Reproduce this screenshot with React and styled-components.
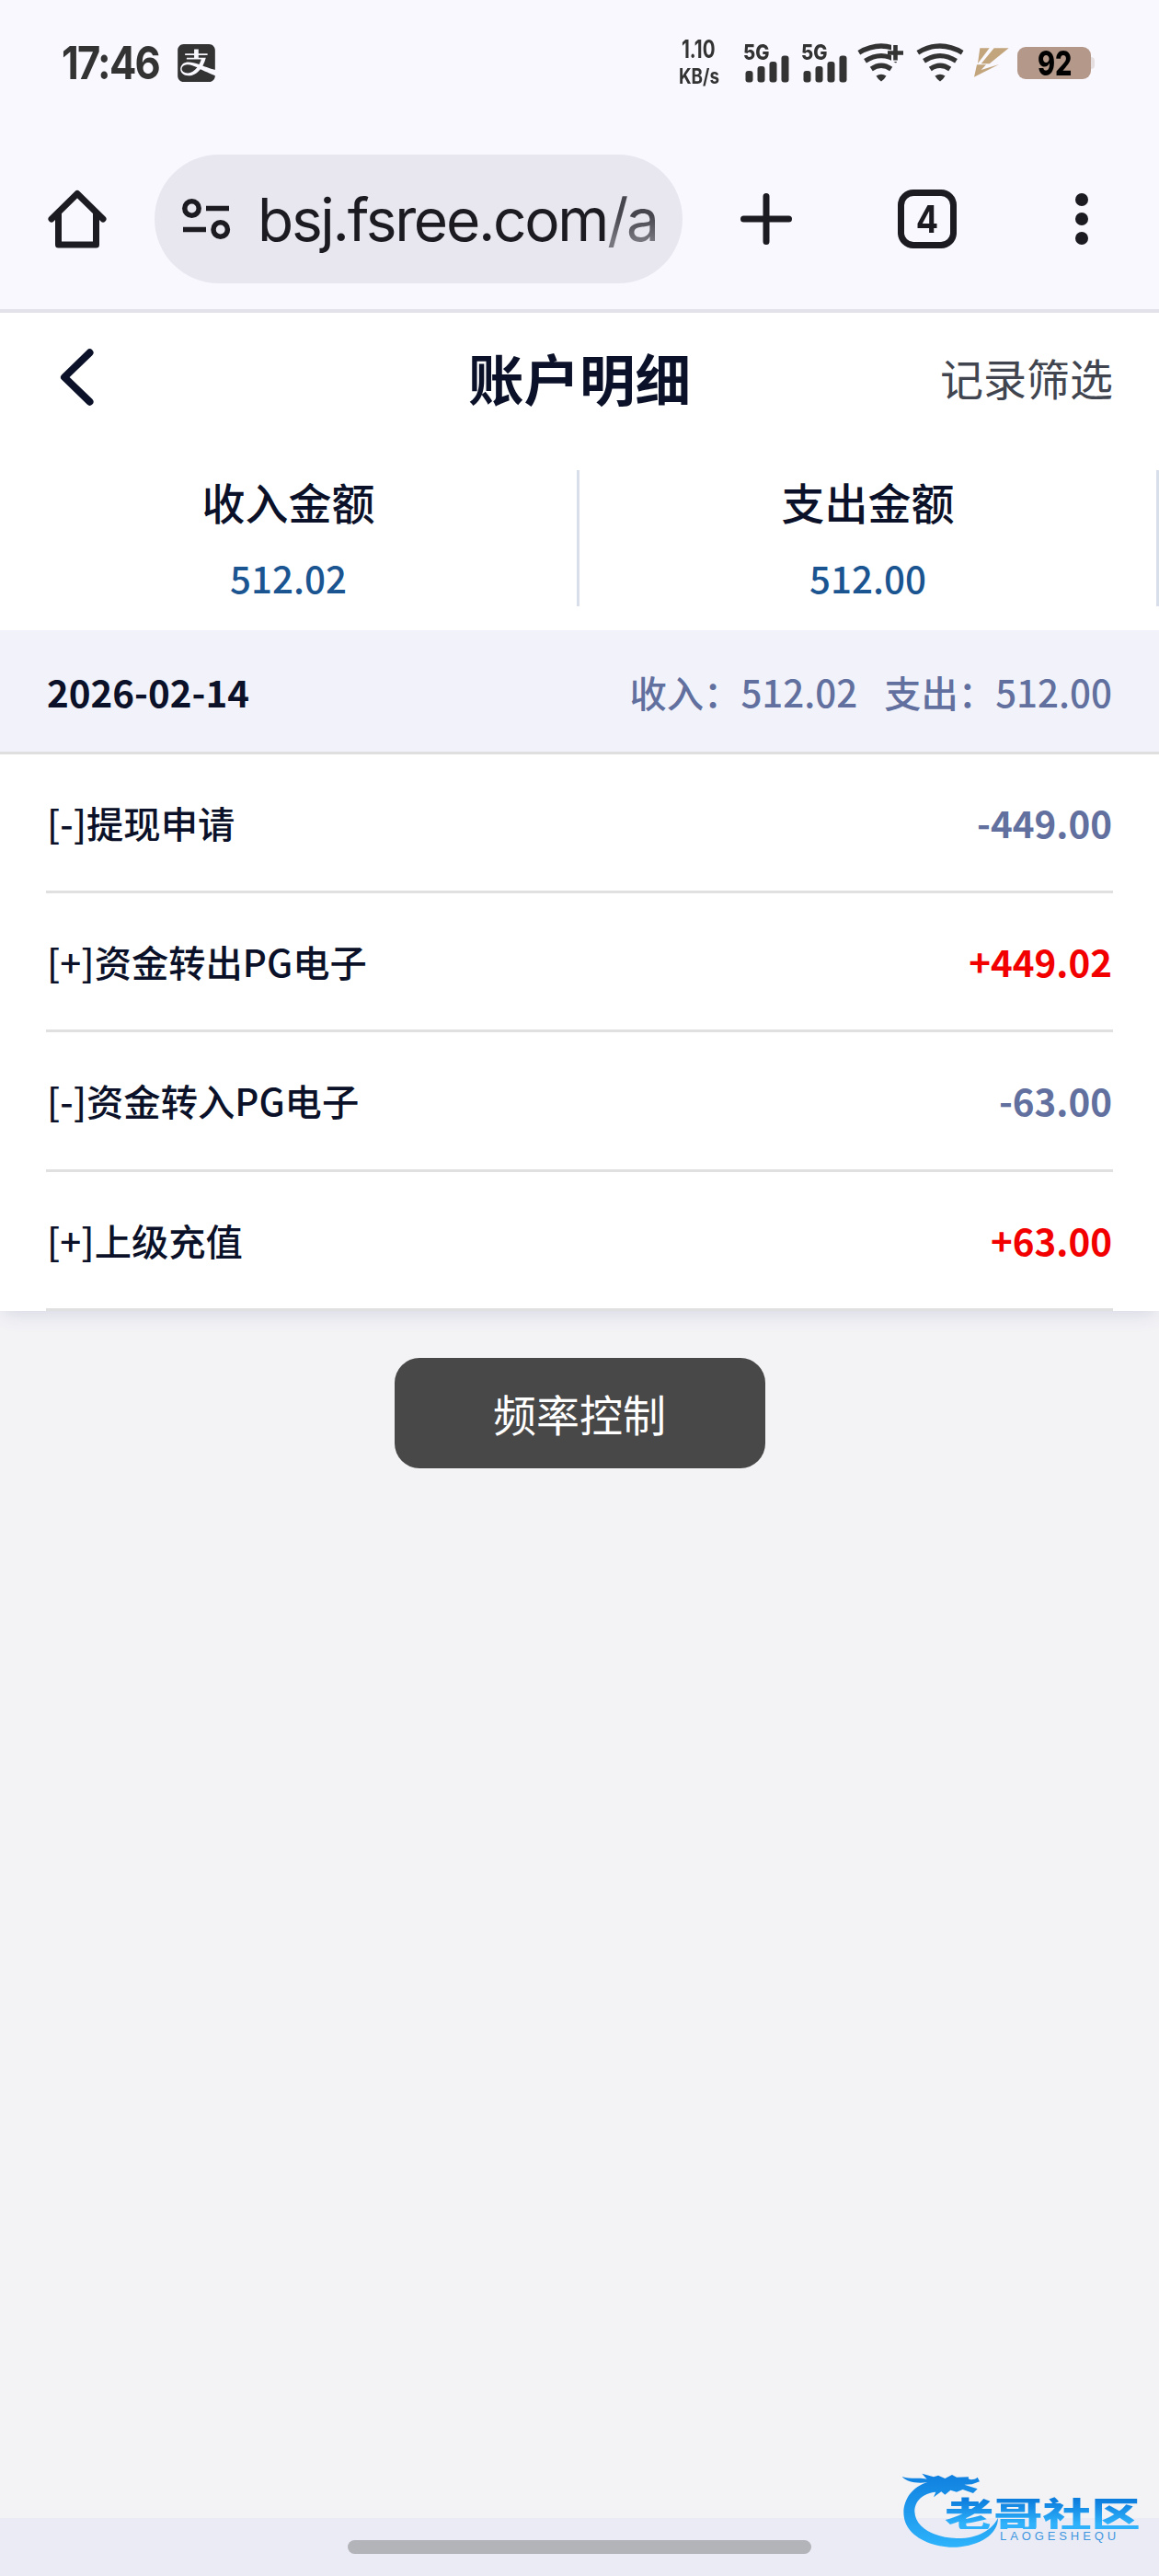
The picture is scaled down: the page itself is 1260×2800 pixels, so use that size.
import React from "react";
import styled, { createGlobalStyle } from "styled-components";
import { SiAlipay } from "react-icons/si";

const GlobalStyle = createGlobalStyle`
  * { box-sizing: border-box; }
  html, body { margin: 0; padding: 0; background: #f3f3f6; }
  body { font-family: "Noto Sans CJK SC", "Noto Sans", sans-serif; }
`;

const Screen = styled.div`
  position: relative;
  display: flex;
  flex-direction: column;
  width: 1260px;
  height: 2800px;
  overflow: hidden;
  background: #f3f3f6;
`;

/* ---------- system status bar ---------- */

const StatusBar = styled.div`
  display: flex;
  align-items: center;
  justify-content: space-between;
  flex: none;
  height: 140px;
  padding: 0 70px 4px 67px;
  background: #f9f8ff;
  color: #333333;
  font-family: Inter, "Liberation Sans", sans-serif;
`;

const StatusGroup = styled.div`
  display: flex;
  align-items: center;
`;

const Condensed = styled.span`
  display: block;
  width: ${(p) => p.$width}px;
  font-size: ${(p) => p.$size}px;
  line-height: ${(p) => p.$line || p.$size}px;
  font-weight: ${(p) => p.$weight || 700};
  letter-spacing: ${(p) => p.$spacing || 0}px;
  white-space: nowrap;
  transform: scaleX(${(p) => p.$scale});
  transform-origin: 0 50%;
`;

const AlipayBadge = styled(SiAlipay)`
  width: 41px;
  height: 41px;
  margin-left: 22px;
`;

const Speed = styled.div`
  display: flex;
  flex-direction: column;
  align-items: center;
  width: 46px;
  margin: 0 25px 3px 0;
`;

const StatusIcon = styled.svg`
  display: block;
  flex: none;
  margin-right: ${(p) => p.$after || 0}px;
`;

const Cell = styled.div`
  display: flex;
  flex-direction: column;
  width: 50px;
  height: 43px;
  margin-right: ${(p) => p.$after}px;
`;

const CellBars = styled.svg`
  display: block;
  margin-top: -7px;
`;

const Battery = styled.div`
  display: flex;
  align-items: center;
  justify-content: center;
  width: 80px;
  height: 35px;
  border-radius: 9px;
  background: #b49889;
  color: #000;
`;

const BatteryTip = styled.div`
  width: 4px;
  height: 13px;
  border-radius: 0 4px 4px 0;
  background: #e5dfe2;
`;

/* ---------- browser toolbar ---------- */

const Toolbar = styled.div`
  display: flex;
  align-items: center;
  flex: none;
  height: 200px;
  padding: 0 0 0 52px;
  border-bottom: 4px solid #e3e2ea;
  background: #f9f8ff;
  color: #1b1b21;
`;

const AddressPill = styled.div`
  display: flex;
  align-items: center;
  width: 574px;
  height: 140px;
  margin: 0 63px 0 52px;
  padding-left: 30px;
  border-radius: 70px;
  background: #e8e7f0;
`;

const Url = styled.div`
  width: 445px;
  margin: 2px 0 0 29px;
  font-family: Inter, "Liberation Sans", sans-serif;
  font-size: 64px;
  line-height: 90px;
  letter-spacing: -2.3px;
  white-space: nowrap;
`;

const UrlPath = styled.span`
  background: linear-gradient(#47464f 45%, #77767f 80%);
  background-clip: text;
  -webkit-background-clip: text;
  color: transparent;
`;

const TabCount = styled.div`
  display: flex;
  align-items: center;
  justify-content: center;
  width: 64px;
  height: 64px;
  margin: 0 129px 0 115px;
  border: 7px solid #1b1b21;
  border-radius: 17px;
  font: 700 41px/50px Inter, "Liberation Sans", sans-serif;
`;

const TabDigit = styled.span`
  transform: scaleX(0.88);
`;

const MenuDots = styled.div`
  display: flex;
  flex-direction: column;
  gap: 7px;
`;

const Dot = styled.i`
  display: block;
  width: 14px;
  height: 14px;
  border-radius: 50%;
  background: #1b1b21;
`;

/* ---------- page ---------- */

const Page = styled.main`
  display: flex;
  flex-direction: column;
  flex: 1;
  color: #0b1128;
`;

const Header = styled.header`
  display: grid;
  grid-template-columns: 1fr auto 1fr;
  align-items: center;
  flex: none;
  height: 148px;
  padding: 0 50px 9px 64px;
  background: #fff;
`;

const Title = styled.h1`
  margin: 0 0 0 -14px;
  font-size: 60.5px;
  line-height: 88px;
  font-weight: 700;
`;

const FilterLink = styled.a`
  justify-self: end;
  color: #41454f;
  font-size: 47px;
  line-height: 68px;
`;

const Totals = styled.section`
  position: relative;
  z-index: 1;
  display: flex;
  flex: none;
  height: 197px;
  padding: 23px 0 26px;
  background: #fff;
`;

const Total = styled.div`
  display: flex;
  flex: 1;
  flex-direction: column;
  align-items: center;
  border-right: 3px solid #d8deea;
`;

const TotalLabel = styled.div`
  font-size: 47px;
  line-height: 68px;
  font-weight: 500;
`;

const TotalValue = styled.div`
  margin-top: 19px;
  color: #1a5591;
  font-size: 40.3px;
  line-height: 60px;
  font-weight: 500;
`;

const Ledger = styled.section`
  flex: none;
  background: #fff;
  box-shadow: 0 6px 20px -4px rgba(80, 90, 140, 0.2);
`;

const DayBar = styled.div`
  display: flex;
  align-items: center;
  justify-content: space-between;
  height: 135px;
  padding: 0 51px;
  border-bottom: 3px solid #dfdfdf;
  background: #f2f3fa;
  font-size: 40.3px;
`;

const DayDate = styled.strong`
  font-weight: 700;
`;

const DaySums = styled.div`
  display: flex;
  gap: 29px;
  color: #61709e;
  font-weight: 500;
`;

const Entry = styled.div`
  display: flex;
  align-items: center;
  justify-content: space-between;
  height: 151.2px;
  margin: 0 50px;
  padding: 0 1px 1px;
  border-bottom: 3px solid #e0e0e0;
  font-size: 40.3px;
`;

const EntryName = styled.span`
  font-weight: 500;
`;

const EntryAmount = styled.span`
  color: ${(p) => (p.$income ? "#f20000" : "#61709e")};
  font-weight: 700;
`;

const Toast = styled.div`
  display: flex;
  align-items: center;
  justify-content: center;
  align-self: center;
  width: 403px;
  height: 120px;
  margin-top: 51px;
  border-radius: 27px;
  background: #484848;
  color: #fff;
  font-size: 47px;
`;

const GestureBar = styled.div`
  display: flex;
  justify-content: center;
  align-items: flex-start;
  flex: none;
  height: 63px;
  padding-top: 24px;
  background: #ebebf5;
`;

const GestureHandle = styled.div`
  width: 504px;
  height: 15px;
  border-radius: 8px;
  background: #b3b4b9;
`;

/* ---------- community watermark, laid over the corner ---------- */

const Watermark = styled.div`
  position: absolute;
  right: 0;
  bottom: 0;
  width: 320px;
  height: 140px;
  padding: 52px 0 0 87px;
`;

const Dragon = styled.svg`
  position: absolute;
  left: 0;
  top: 0;
`;

const WatermarkName = styled.div`
  position: relative;
  width: 152px;
  height: 37px;
  background: linear-gradient(#0d7ddd 15%, #2fb2fb 85%);
  background-clip: text;
  -webkit-background-clip: text;
  color: transparent;
  font-size: 38px;
  line-height: 37px;
  font-weight: 900;
  white-space: nowrap;
  transform: scaleX(1.4);
  transform-origin: 0 50%;
`;

const WatermarkLatin = styled.div`
  position: relative;
  margin: 1px 0 0 60px;
  color: #3f97e0;
  font: 400 13px/14px "Liberation Sans", sans-serif;
  letter-spacing: 3.9px;
`;

const entries = [
  { name: "[-]提现申请", amount: "-449.00" },
  { name: "[+]资金转出PG电子", amount: "+449.02" },
  { name: "[-]资金转入PG电子", amount: "-63.00" },
  { name: "[+]上级充值", amount: "+63.00" },
];

function Signal({ after }) {
  return (
    <Cell $after={after}>
      <Condensed $width={28} $size={23} $line={20} $weight={800} $scale={0.88}>
        5G
      </Condensed>
      <CellBars width="50" height="30" viewBox="0 0 50 30" fill="#333">
        <rect x="2.5" y="17" width="8" height="12.5" rx="3" />
        <rect x="15.5" y="12" width="8" height="17.5" rx="3" />
        <rect x="28.5" y="7" width="8" height="22.5" rx="3" />
        <rect x="41.5" y="0.5" width="8" height="29" rx="3" />
      </CellBars>
    </Cell>
  );
}

function Wifi({ plus, after }) {
  return (
    <StatusIcon
      width="52"
      height="42"
      viewBox="0 0 52 42"
      fill="none"
      stroke="#333"
      strokeWidth="5.2"
      $after={after}
    >
      <path d="M1.8 10.2Q26 -4.2 50.2 10.2" />
      <path d="M8.5 19.3Q26 8 43.5 19.3" />
      <path d="M15.3 28Q26 20.5 36.7 28" />
      <path
        d="M20.5 35.5Q26 32 31.5 35.5Q30 38.5 26 41.5Q22 38.5 20.5 35.5Z"
        fill="#333"
        stroke="none"
      />
      {plus && (
        <>
          <path d="M37 -2H52V20H37Z" fill="#f9f8ff" stroke="none" />
          <path d="M33 10.5H50M41.5 2V18.5" strokeWidth="4.6" />
        </>
      )}
    </StatusIcon>
  );
}

export default function App() {
  return (
    <Screen>
      <GlobalStyle />
      <StatusBar>
        <StatusGroup>
          <Condensed $width={104} $size={50} $spacing={-2} $scale={0.87}>
            17:46
          </Condensed>
          <AlipayBadge />
        </StatusGroup>
        <StatusGroup>
          <Speed>
            <Condensed $width={38} $size={27} $line={31} $weight={700} $scale={0.76}>
              1.10
            </Condensed>
            <Condensed $width={45} $size={22.5} $line={27} $weight={700} $scale={0.84}>
              KB/s
            </Condensed>
          </Speed>
          <Signal after={13} />
          <Signal after={11} />
          <Wifi plus after={12} />
          <Wifi after={11} />
          <StatusIcon width="38" height="32" viewBox="417 99 114 96" fill="#c2a57c" $after={9}>
            <path d="M436 100H467L429 150Z" />
            <path d="M482 100H530L467 151H440Z" />
            <path d="M426 154H456L440 171L498 153L417 194Z" />
          </StatusIcon>
          <Battery>
            <Condensed $width={36} $size={37} $weight={800} $scale={0.78}>
              92
            </Condensed>
          </Battery>
          <BatteryTip />
        </StatusGroup>
      </StatusBar>

      <Toolbar>
        <svg width="64" height="64" viewBox="0 0 64 64" fill="none" stroke="#1b1b21" strokeWidth="7" strokeLinecap="round" strokeLinejoin="round">
          <path d="M4 32L32 4.5L60 32" />
          <path d="M11.5 26V60H52.5V26" />
        </svg>
        <AddressPill>
          <svg width="53" height="44" viewBox="0 0 53 44" fill="none" stroke="#1b1b21" strokeWidth="5.5">
            <circle cx="10.5" cy="10.5" r="7.7" />
            <path d="M26 10.5H51M1 33.5H26" />
            <circle cx="41.7" cy="33.5" r="7.7" />
          </svg>
          <Url>
            bsj.fsree.com<UrlPath>/a</UrlPath>
          </Url>
        </AddressPill>
        <svg width="56" height="56" viewBox="0 0 56 56" stroke="#1b1b21" strokeWidth="7" strokeLinecap="round">
          <path d="M28 3.5V52.5M3.5 28H52.5" />
        </svg>
        <TabCount>
          <TabDigit>4</TabDigit>
        </TabCount>
        <MenuDots>
          <Dot />
          <Dot />
          <Dot />
        </MenuDots>
      </Toolbar>

      <Page>
        <Header>
          <svg width="40" height="62" viewBox="0 0 40 62" fill="none" stroke="#0b1128" strokeWidth="8" strokeLinecap="round" strokeLinejoin="round">
            <path d="M33.5 4.3L6 31L33.5 57.7" />
          </svg>
          <Title>账户明细</Title>
          <FilterLink>记录筛选</FilterLink>
        </Header>

        <Totals>
          <Total>
            <TotalLabel>收入金额</TotalLabel>
            <TotalValue>512.02</TotalValue>
          </Total>
          <Total>
            <TotalLabel>支出金额</TotalLabel>
            <TotalValue>512.00</TotalValue>
          </Total>
        </Totals>

        <Ledger>
          <DayBar>
            <DayDate>2026-02-14</DayDate>
            <DaySums>
              <span>收入：512.02</span>
              <span>支出：512.00</span>
            </DaySums>
          </DayBar>
          {entries.map((entry) => (
            <Entry key={entry.name}>
              <EntryName>{entry.name}</EntryName>
              <EntryAmount $income={entry.amount.startsWith("+")}>{entry.amount}</EntryAmount>
            </Entry>
          ))}
        </Ledger>

        <Toast>频率控制</Toast>
      </Page>

      <GestureBar>
        <GestureHandle />
      </GestureBar>

      <Watermark>
        <Dragon width="320" height="140" viewBox="0 0 960 420">
          <defs>
            <linearGradient id="dragonBlue" x1="0" y1="0" x2="0" y2="1">
              <stop offset="0" stopColor="#0f7fdf" />
              <stop offset="1" stopColor="#2db3fb" />
            </linearGradient>
          </defs>
          <path
            fill="url(#dragonBlue)"
            d="M122 96C150 106 180 98 203 104L187 86L225 97L240 92L262 102L285 90L300 98L340 97C332 106 355 110 368 98L375 112L350 121L325 122L368 136L354 150L320 138L300 146L280 140L262 155L250 145L225 163L232 146C190 150 163 175 163 210C165 262 225 294 300 297C370 298 415 270 435 230C436 285 375 322 300 326C215 328 136 290 128 225C122 180 150 130 205 114C170 120 135 112 122 96Z"
          />
        </Dragon>
        <WatermarkName>老哥社区</WatermarkName>
        <WatermarkLatin>LAOGESHEQU</WatermarkLatin>
      </Watermark>
    </Screen>
  );
}
